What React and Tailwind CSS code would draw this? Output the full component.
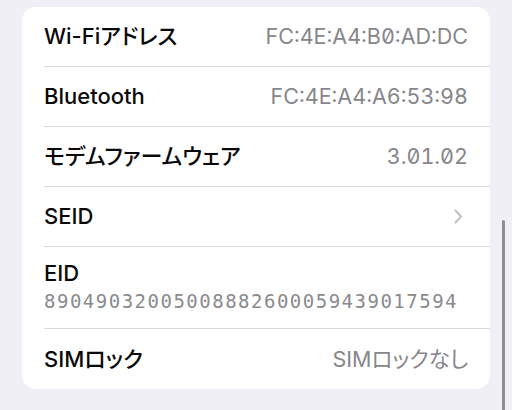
import React from 'react';

const rows = [
  { label: 'Wi-Fiアドレス', value: 'FC:4E:A4:B0:AD:DC' },
  { label: 'Bluetooth', value: 'FC:4E:A4:A6:53:98' },
  { label: 'モデムファームウェア', value: '3.01.02' },
  { label: 'SEID', chevron: true },
];

const font = "font-['Inter','Noto_Sans_CJK_JP',sans-serif]";

const Chevron = () => (
  <svg width="9" height="15" viewBox="0 0 9 15" fill="none" className="mr-[5px]">
    <path d="M1.5 1.5L7 7.5L1.5 13.5" stroke="#c4c4c7" strokeWidth="2.2" strokeLinecap="round" strokeLinejoin="round" />
  </svg>
);

const Row = ({ label, value, chevron, last }) => (
  <div className="pl-[22px]">
    <div className={`h-[60px] flex items-center justify-between pr-[22px] ${last ? '' : 'border-b border-[#d9d9dc]'}`}>
      <span className="text-[22px] font-medium text-[#0a0a0a] [font-feature-settings:'palt']">{label}</span>
      {chevron ? (
        <Chevron />
      ) : (
        <span className="text-[21.5px] text-[#86868b] [font-feature-settings:'zero','tnum','palt']">{value}</span>
      )}
    </div>
  </div>
);

export default function App() {
  return (
    <div className={`relative w-[512px] h-[410px] overflow-hidden bg-[#f0eff5] pt-[7px] pl-[22px] ${font}`}>
      <div className="w-[468px] bg-white rounded-[14px]">
        {rows.map((r) => (
          <Row key={r.label} {...r} />
        ))}
        <div className="pl-[22px]">
          <div className="h-[82px] flex flex-col justify-center border-b border-[#d9d9dc] pr-[22px]">
            <span className="text-[22px] font-medium text-[#0a0a0a] leading-[26px]">EID</span>
            <span className="font-['DejaVu_Sans_Mono',monospace] text-[19px] tracking-[1.5px] text-[#8a8a8e] leading-[30px]">
              89049032005008882600059439017594
            </span>
          </div>
        </div>
        <Row label="SIMロック" value="SIMロックなし" last />
      </div>
      <div className="absolute left-[502px] top-[220px] w-[3px] h-[200px] rounded-full bg-[#8e8e93]" />
    </div>
  );
}
